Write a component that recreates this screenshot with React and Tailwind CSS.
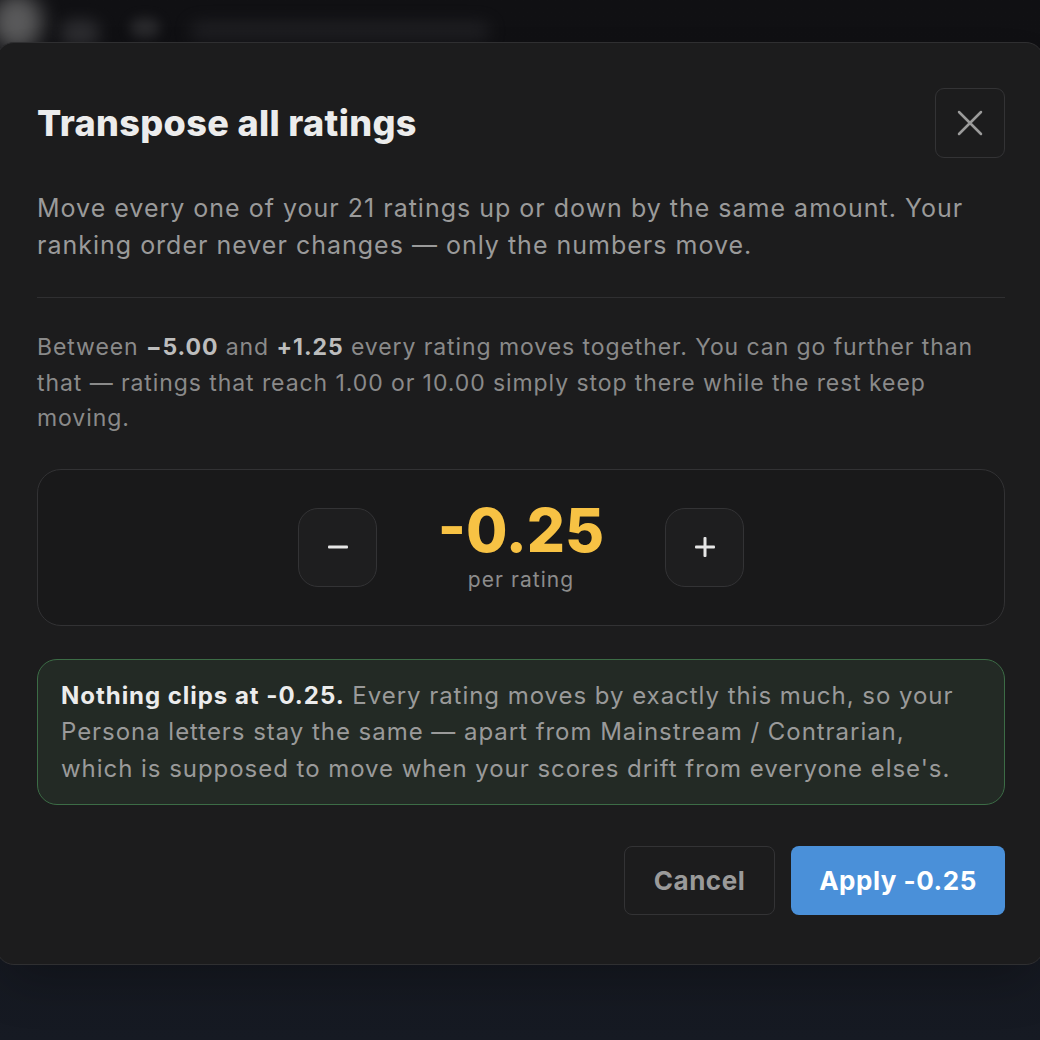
import React, { useState } from 'react';

const font = { fontFamily: 'Inter, "Noto Sans", sans-serif' };

export default function App() {
  const [delta, setDelta] = useState(-0.25);
  const label = delta.toFixed(2);

  return (
    <div
      className="relative min-h-screen w-full overflow-hidden bg-gradient-to-b from-[#101013] via-[#111114] to-[#161a23] pt-[42px]"
      style={font}
    >
      {/* blurred page behind the modal */}
      <div className="absolute left-[-8px] top-[-6px] h-[56px] w-[50px] rounded-full bg-[#8a8a8a] opacity-60 blur-[10px]" />
      <div className="absolute left-[60px] top-[20px] h-[26px] w-[40px] rounded-full bg-[#4a4a4e] opacity-50 blur-[8px]" />
      <div className="absolute left-[130px] top-[18px] h-[20px] w-[30px] rounded-full bg-[#3a3a3d] opacity-60 blur-[6px]" />
      <div className="absolute left-[190px] top-[22px] h-[18px] w-[300px] rounded-full bg-[#2a2a2e] opacity-60 blur-[8px]" />

      <div className="relative ml-[-4px] w-[1048px] rounded-[18px] border border-[#2f2f31] bg-[#1c1c1d] pb-[49px] pl-[40px] pr-[38px] pt-[45px] shadow-2xl">
        {/* Header */}
        <div className="flex items-center justify-between">
          <h2 className="text-[36px] font-extrabold leading-none tracking-[0.01em] text-[#ececec]">
            Transpose all ratings
          </h2>
          <button className="flex h-[70px] w-[70px] items-center justify-center rounded-[9px] border border-[#333335] bg-transparent">
            <svg width="26" height="26" viewBox="0 0 26 26" fill="none" stroke="#9b9b9b" strokeWidth="2.5" strokeLinecap="round">
              <path d="M2 2 L24 24 M24 2 L2 24" />
            </svg>
          </button>
        </div>

        <p className="mt-[32px] text-[25px] leading-[37px] tracking-[0.04em] text-[#9a9a9a]">
          Move every one of your 21 ratings up or down by the same amount. Your
          <br />
          ranking order never changes — only the numbers move.
        </p>

        <div className="mt-[33px] h-px bg-[#2f2f31]" />

        <p className="mt-[32px] text-[23px] leading-[35.5px] tracking-[0.04em] text-[#8a8a8a]">
          Between <span className="font-bold text-[#bdbdbd]">−5.00</span> and{' '}
          <span className="font-bold text-[#bdbdbd]">+1.25</span> every rating moves together. You can go further than
          <br />
          that — ratings that reach 1.00 or 10.00 simply stop there while the rest keep
          <br />
          moving.
        </p>

        {/* Stepper */}
        <div className="mt-[32px] flex h-[157px] items-center justify-center gap-[61px] rounded-[24px] border border-[#323234] bg-[#19191a]">
          <button
            onClick={() => setDelta((d) => d - 0.25)}
            className="flex h-[79px] w-[79px] items-center justify-center rounded-[20px] border border-[#333335] bg-[#1e1e1f]"
          >
            <svg width="20" height="4" viewBox="0 0 20 4">
              <rect x="0" y="0.5" width="20" height="3" rx="1" fill="#e6e6e6" />
            </svg>
          </button>
          <div className="flex w-[166px] flex-col items-center">
            <div className="text-[60px] font-extrabold leading-[60px] text-[#f7c244]">{label}</div>
            <div className="mt-[6px] text-[21px] leading-[28px] tracking-[0.05em] text-[#8c8c8c]">per rating</div>
          </div>
          <button
            onClick={() => setDelta((d) => d + 0.25)}
            className="flex h-[79px] w-[79px] items-center justify-center rounded-[20px] border border-[#333335] bg-[#1e1e1f]"
          >
            <svg width="20" height="20" viewBox="0 0 20 20">
              <rect x="0" y="8.5" width="20" height="3" rx="1" fill="#e6e6e6" />
              <rect x="8.5" y="0" width="3" height="20" rx="1" fill="#e6e6e6" />
            </svg>
          </button>
        </div>

        {/* Info */}
        <div className="mt-[33px] rounded-[20px] border border-[#3c6c46] bg-[#232a25] px-[23px] pb-[17px] pt-[18px] text-[24px] leading-[36.5px] tracking-[0.04em] text-[#9a9a9a]">
          <span className="font-bold text-[#ececec]">Nothing clips at {label}.</span> Every rating moves by exactly this much, so your
          <br />
          Persona letters stay the same — apart from Mainstream / Contrarian,
          <br />
          which is supposed to move when your scores drift from everyone else's.
        </div>

        {/* Actions */}
        <div className="mt-[41px] flex justify-end gap-[16px]">
          <button className="h-[69px] w-[151px] rounded-[8px] border border-[#333335] text-[26px] font-bold tracking-[0.02em] text-[#9a9a9a]">
            Cancel
          </button>
          <button className="h-[69px] w-[214px] rounded-[8px] bg-[#4a90d9] text-[26px] font-bold tracking-[0.02em] text-white">
            Apply {label}
          </button>
        </div>
      </div>
    </div>
  );
}
